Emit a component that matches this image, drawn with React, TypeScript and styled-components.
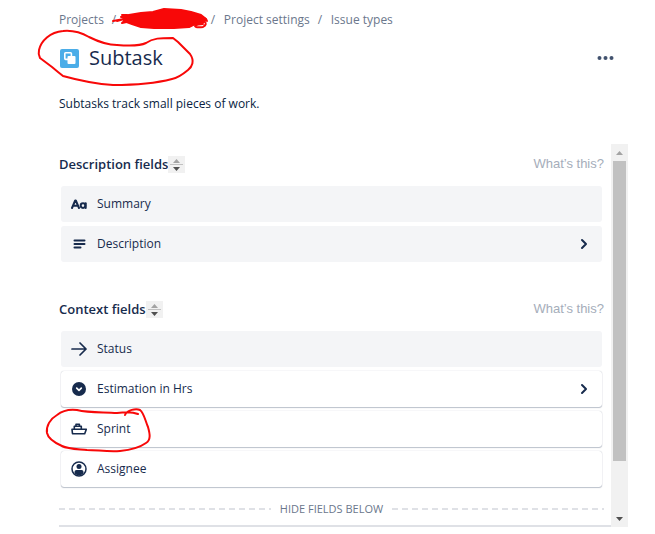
import React from "react";
import styled, { createGlobalStyle } from "styled-components";

const GlobalStyle = createGlobalStyle`
  * { box-sizing: border-box; }
  body {
    margin: 0;
    background: #fff;
    color: #172b4d;
    font-family: "Open Sans", "Noto Sans", sans-serif;
    font-size: 12px;
    line-height: 20px;
  }
  button { font: inherit; color: inherit; border: 0; padding: 0; background: none; cursor: pointer; }
  svg { display: block; flex: none; }
`;

const Page = styled.main`
  padding: 10px 27px 7px 59px;
`;

const Crumbs = styled.ol`
  display: flex;
  gap: 8px;
  margin: 0;
  padding: 0;
  list-style: none;
  color: #6b778c;
`;

const Crumb = styled.li`
  display: flex;
  gap: 8px;
  position: relative;
  white-space: nowrap;

  & + &::before {
    content: "/";
    width: 5px;
  }
`;

const CrumbLink = styled.a`
  color: inherit;
  text-decoration: none;
`;

const HiddenName = styled.a`
  width: 78px;
  height: 20px;
`;

const Ink = styled.svg<{ $left: number; $top: number }>`
  position: absolute;
  z-index: 1;
  left: ${(p) => p.$left}px;
  top: ${(p) => p.$top}px;
  overflow: visible;
  fill: none;
  stroke: #f80808;
  stroke-width: 2;
  stroke-linecap: round;
  stroke-linejoin: round;
  pointer-events: none;
`;

const Header = styled.header`
  display: flex;
  align-items: center;
  justify-content: space-between;
  margin-top: 13px;
  padding-right: 14px;
`;

const TitleGroup = styled.div`
  position: relative;
  display: flex;
  align-items: center;
  gap: 10px;
  padding-left: 1px;
`;

const Title = styled.h1`
  margin: 0;
  font-size: 20px;
  line-height: 30px;
  font-weight: 500;
`;

const Summary = styled.p`
  margin: 21px 0 0;
  color: #091e42;
`;

const Panel = styled.section`
  display: flex;
  margin-top: 30px;
`;

const Fields = styled.div`
  flex: 1;
  min-width: 0;
  padding: 10px 7px 0 0;
  border-bottom: 2px solid #dfe1e6;
`;

const Group = styled.section`
  & + & { margin-top: 37px; }
`;

const GroupHead = styled.div`
  display: flex;
  align-items: center;
  justify-content: space-between;
`;

const GroupTitle = styled.div`
  display: flex;
  align-items: center;
`;

const Heading = styled.h2`
  margin: 0;
  font-size: 13px;
  line-height: 20px;
  font-weight: 600;
`;

const SortButton = styled.button`
  background: #f1f1f1;
`;

const HelpLink = styled.a`
  color: #a5adba;
  font-family: "Liberation Sans", Arial, sans-serif;
  font-size: 13px;
  text-decoration: none;
`;

const Rows = styled.ul`
  display: grid;
  gap: 4px;
  margin: 12px 2px 0;
  padding: 0;
  list-style: none;
`;

const RowItem = styled.li`
  position: relative;
`;

const Row = styled.button<{ $raised?: boolean }>`
  display: flex;
  align-items: center;
  gap: 10px;
  width: 100%;
  height: 36px;
  padding: 0 10px;
  border-radius: 3px;
  text-align: left;
  background: ${(p) => (p.$raised ? "#fff" : "#f4f5f7")};
  box-shadow: ${(p) =>
    p.$raised ? "0 1px 1px rgba(9,30,66,.25), 0 0 1px rgba(9,30,66,.31)" : "none"};
`;

const RowLabel = styled.span`
  flex: 1;
`;

const HideDivider = styled.div`
  display: flex;
  align-items: center;
  gap: 9px;
  margin-top: 12px;
  padding-bottom: 6px;
  color: #6b778c;
  font-size: 11px;
  font-weight: 500;
`;

const Dashes = styled.span`
  flex: 1;
  height: 2px;
  background: repeating-linear-gradient(to right, #dfe1e6 0 6px, transparent 6px 10px);
`;

const Scrollbar = styled.div`
  display: flex;
  flex-direction: column;
  width: 17px;
  background: #f1f1f1;
`;

const ScrollTrack = styled.div`
  flex: 1;
  padding: 0 2px;
`;

const ScrollThumb = styled.div`
  height: 86%;
  background: #c1c1c1;
`;

const SubtaskIcon = () => (
  <svg width="19" height="19" viewBox="0 0 19 19">
    <rect width="19" height="19" rx="2" fill="#4bade8" />
    <rect x="4.8" y="3.8" width="6.6" height="6.6" rx=".8" fill="none" stroke="#fff" strokeWidth="1.6" />
    <rect x="7.5" y="7" width="8" height="8" rx="1" fill="#fff" />
  </svg>
);

const SortIcon = () => (
  <svg width="17" height="17" viewBox="0 0 17 17">
    <path d="M5 7h7L8.500 3z" fill="#a3a3a3" />
    <path d="M2 8.500h13" stroke="#c1c1c1" />
    <path d="M5 11h7l-3.500 4z" fill="#505050" />
  </svg>
);

const TextIcon = () => (
  <svg width="16" height="16" viewBox="0 0 16 16" fill="none" stroke="#172b4d" strokeWidth="2" strokeLinejoin="round" strokeLinecap="round">
    <path d="M1 12 4.200 4.500h.6L8 12M2.300 9.800h4.400" />
    <circle cx="12" cy="9.600" r="2.300" />
    <path d="M14.700 7.200V12" />
  </svg>
);

const ParagraphIcon = () => (
  <svg width="16" height="16" viewBox="0 0 16 16" stroke="#172b4d" strokeWidth="2" strokeLinecap="round">
    <path d="M3.500 4.500h10M3.500 8h10M3.500 11.500h6" />
  </svg>
);

const ArrowIcon = () => (
  <svg width="16" height="16" viewBox="0 0 16 16" fill="none" stroke="#172b4d" strokeWidth="1.700" strokeLinecap="round" strokeLinejoin="round">
    <path d="M1 8h14M9 2l6 6-6 6" />
  </svg>
);

const DropdownIcon = () => (
  <svg width="16" height="16" viewBox="0 0 16 16">
    <circle cx="8" cy="8" r="7" fill="#172b4d" />
    <path d="m5.700 7.200 2.300 2.200 2.300-2.200" fill="none" stroke="#fff" strokeWidth="1.700" strokeLinecap="round" strokeLinejoin="round" />
  </svg>
);

const ShipIcon = () => (
  <svg width="16" height="16" viewBox="0 0 16 16" fill="none" stroke="#172b4d" strokeWidth="1.600" strokeLinejoin="round">
    <path d="M1 8.300h14.300l-1.600 4.400H1.500z" />
    <path d="M3.300 8V5.300h7V8" />
    <path d="M5 5V3.200h3.400V5" />
  </svg>
);

const PersonIcon = () => (
  <svg width="16" height="16" viewBox="0 0 16 16">
    <circle cx="8" cy="8" r="7" fill="none" stroke="#172b4d" strokeWidth="1.500" />
    <circle cx="8" cy="5.600" r="2.500" fill="#172b4d" />
    <path d="M3.500 12.500V11q0-2 2-2h5q2 0 2 2v1.500Q8 16.500 3.500 12.500z" fill="#172b4d" />
  </svg>
);

const Chevron = () => (
  <svg width="16" height="16" viewBox="0 0 16 16" fill="none" stroke="#172b4d" strokeWidth="2" strokeLinecap="round" strokeLinejoin="round">
    <path d="m6 4 4 4-4 4" />
  </svg>
);

const DotsIcon = () => (
  <svg width="17" height="16" viewBox="0 0 17 16" fill="#42526e">
    <circle cx="2.500" cy="8" r="2" />
    <circle cx="8.500" cy="8" r="2" />
    <circle cx="14.500" cy="8" r="2" />
  </svg>
);

const ScrollArrow = ({ down = false }: { down?: boolean }) => (
  <svg width="17" height="17" viewBox="0 0 17 17">
    <path d={down ? "M5 7h7l-3.500 4z" : "M5 11h7L8.500 7z"} fill={down ? "#505050" : "#a3a3a3"} />
  </svg>
);

const NameScribble = () => (
  <Ink $left={0} $top={-4} width="100" height="26" viewBox="111 6 100 26">
    <path fill="#f80808" d="M122 16 140 13 152 12 163 9 180 10 190 12 200 15 205 19 203 22 194 24 188 27 173 28 153 28 140 27 131 24 123 21z" />
    <path d="M112 21 123 19 116 21M121 15 126 15 120 17 128 17 121 23 130 21M193 23q7 1 10-2 4 3-1 6-7 1-8-1 2-2 8-2M196 16q10 2 10 5" />
  </Ink>
);

const TitleCircle = () => (
  <Ink $left={-22} $top={-14} width="158" height="58" viewBox="37 30 158 58">
    <path d="M39 51C41 42 50 33 63 32C73 31 82 34 89 38C99 43 108 46 117 46C129 47 140 47 146 44C153 39 160 39 173 39L178 43L190 55C195 62 192 68 188 71C182 76 178 79 172 80C153 85 133 86 113 86C96 85 81 82 63 77L58 73L52 68L40 59Q38 55 39 51" />
  </Ink>
);

const SprintCircle = () => (
  <Ink $left={-16} $top={-5} width="108" height="48" viewBox="45 406 108 48">
    <path d="M125 415C127 410 136 408 140 410C144 413 145 420 148 427C150 434 151 440 146 443C139 448 130 450 120 451C108 452 97 450 87 450C77 449 68 449 62 446C53 442 48 438 47 433C46 426 50 419 57 415C62 411 69 409 77 410C89 413 103 412 117 413Q131 411 138 414" />
  </Ink>
);

type Field = { label: string; Icon: () => React.JSX.Element; raised?: boolean; opens?: boolean; circled?: boolean };

const groups: { title: string; fields: Field[] }[] = [
  {
    title: "Description fields",
    fields: [
      { label: "Summary", Icon: TextIcon },
      { label: "Description", Icon: ParagraphIcon, opens: true },
    ],
  },
  {
    title: "Context fields",
    fields: [
      { label: "Status", Icon: ArrowIcon },
      { label: "Estimation in Hrs", Icon: DropdownIcon, raised: true, opens: true },
      { label: "Sprint", Icon: ShipIcon, raised: true, circled: true },
      { label: "Assignee", Icon: PersonIcon, raised: true },
    ],
  },
];

export default function App() {
  return (
    <>
      <GlobalStyle />
      <Page>
        <nav aria-label="Breadcrumbs">
          <Crumbs>
            <Crumb><CrumbLink href="#projects">Projects</CrumbLink></Crumb>
            <Crumb>
              <HiddenName href="#project" aria-label="Project" />
              <NameScribble />
            </Crumb>
            <Crumb><CrumbLink href="#settings">Project settings</CrumbLink></Crumb>
            <Crumb><CrumbLink href="#types">Issue types</CrumbLink></Crumb>
          </Crumbs>
        </nav>
        <Header>
          <TitleGroup>
            <SubtaskIcon />
            <Title>Subtask</Title>
            <TitleCircle />
          </TitleGroup>
          <button type="button" aria-label="More actions"><DotsIcon /></button>
        </Header>
        <Summary>Subtasks track small pieces of work.</Summary>
        <Panel>
          <Fields>
            {groups.map((group) => (
              <Group key={group.title}>
                <GroupHead>
                  <GroupTitle>
                    <Heading>{group.title}</Heading>
                    <SortButton type="button" aria-label={`Scroll ${group.title}`}><SortIcon /></SortButton>
                  </GroupTitle>
                  <HelpLink href="#help">What’s this?</HelpLink>
                </GroupHead>
                <Rows>
                  {group.fields.map(({ label, Icon, raised, opens, circled }) => (
                    <RowItem key={label}>
                      <Row type="button" $raised={raised}>
                        <Icon />
                        <RowLabel>{label}</RowLabel>
                        {opens && <Chevron />}
                      </Row>
                      {circled && <SprintCircle />}
                    </RowItem>
                  ))}
                </Rows>
              </Group>
            ))}
            <HideDivider>
              <Dashes />
              HIDE FIELDS BELOW
              <Dashes />
            </HideDivider>
          </Fields>
          <Scrollbar>
            <button type="button" aria-label="Scroll up"><ScrollArrow /></button>
            <ScrollTrack><ScrollThumb /></ScrollTrack>
            <button type="button" aria-label="Scroll down"><ScrollArrow down /></button>
          </Scrollbar>
        </Panel>
      </Page>
    </>
  );
}
